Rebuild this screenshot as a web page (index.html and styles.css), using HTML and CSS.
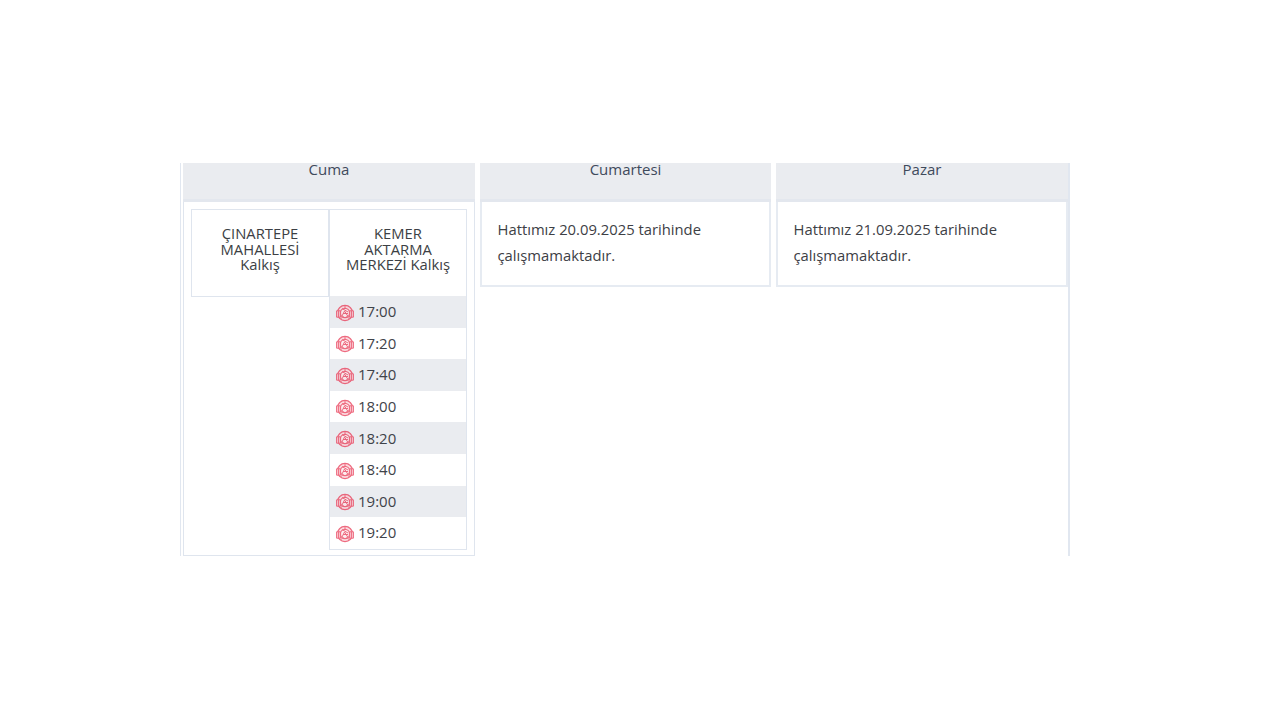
FILE: index.html
```html
<!DOCTYPE html>
<html lang="tr">
<head>
<meta charset="utf-8">
<title>Sefer Saatleri</title>
<link rel="stylesheet" href="styles.css">
</head>
<body>
<svg class="defs" width="0" height="0" aria-hidden="true">
  <symbol id="seal" viewBox="0 0 18 18">
    <g fill="none" stroke="#e8324f">
      <circle cx="9" cy="9" r="7.6" fill="#fbd0d7" stroke-width="1.4"/>
      <circle cx="9" cy="9" r="4.6" fill="#fde6e9" stroke-width="1.1"/>
      <path d="M.6 6.8h4v6.4h-4zM13.4 6.8h4v6.4h-4z" fill="#f8b9c3" stroke-width="1"/>
      <path d="M2.6 6.8v6.4M15.4 6.8v6.4M6 4.5l6 3.5M6 12l2.5-5 3.5 5.5M4.5 15l3-3M13.5 15l-3-3M9 1v3M7 9.5h5" stroke-width="1"/>
    </g>
  </symbol>
</svg>
<main class="page">
  <div class="days">
    <section class="day">
      <h2 class="day-head">Cuma</h2>
      <div class="day-body day-body-table">
        <div class="stops">
          <div class="stop-col">
            <div class="stop-head">ÇINARTEPE MAHALLESİ Kalkış</div>
          </div>
          <div class="stop-col stop-col-times">
            <div class="stop-head">KEMER AKTARMA MERKEZİ Kalkış</div>
            <div class="time alt"><svg class="seal"><use href="#seal"/></svg>17:00</div>
            <div class="time"><svg class="seal"><use href="#seal"/></svg>17:20</div>
            <div class="time alt"><svg class="seal"><use href="#seal"/></svg>17:40</div>
            <div class="time"><svg class="seal"><use href="#seal"/></svg>18:00</div>
            <div class="time alt"><svg class="seal"><use href="#seal"/></svg>18:20</div>
            <div class="time"><svg class="seal"><use href="#seal"/></svg>18:40</div>
            <div class="time alt"><svg class="seal"><use href="#seal"/></svg>19:00</div>
            <div class="time"><svg class="seal"><use href="#seal"/></svg>19:20</div>
          </div>
        </div>
      </div>
    </section>
    <section class="day">
      <h2 class="day-head">Cumartesi</h2>
      <div class="day-body"><p class="note">Hattımız 20.09.2025 tarihinde çalışmamaktadır.</p></div>
    </section>
    <section class="day">
      <h2 class="day-head">Pazar</h2>
      <div class="day-body"><p class="note">Hattımız 21.09.2025 tarihinde çalışmamaktadır.</p></div>
    </section>
  </div>
</main>
</body>
</html>
```
FILE: styles.css
```css
* { box-sizing: border-box; }
html, body { margin: 0; background: #fff; }
body { font-family: "Open Sans", "Noto Sans", sans-serif; color: #3a3f47; }
.defs { position: absolute; }
.page { padding: 163px 0 0 180px; }
.days {
  width: 890px;
  height: 393px;
  display: grid;
  grid-template-columns: 292px 291px 292px;
  column-gap: 5px;
  align-items: start;
  padding: 0 2px;
  border-left: 1px solid #e1e7f0;
  border-right: 2px solid #e1e7f0;
}
.day { display: flex; flex-direction: column; }
.day-head {
  margin: 0;
  height: 39px;
  background: #eaecf0;
  border-bottom: 3px solid #e3e7ee;
  font-size: 15px;
  font-weight: 400;
  line-height: 13px;
  text-align: center;
  color: #3f4a5c;
}
.day-body {
  border: 2px solid #e6ebf2;
  border-top: 0;
  background: #fff;
  padding: 15px 15px 17px 15.5px;
}
.day-body-table {
  height: 354px;
  padding: 7px 6px 6px 7px;
  border-width: 0 1px 1px;
  border-color: #dfe5ee;
}
.stops { display: grid; grid-template-columns: 138px 138px; align-items: start; }
.stop-col { border: 1px solid #dfe5ee; }
.stop-head {
  height: 86px;
  padding: 16px 14px 0;
  font-size: 14.8px;
  line-height: 15.5px;
  text-align: center;
  color: #3c3f44;
}
.time {
  height: 31.6px;
  display: flex;
  align-items: center;
  gap: 4px;
  padding: 0 0 1px 5px;
  font-size: 15px;
  color: #3f4349;
}
.time.alt { background: #eaecf0; }
.seal { width: 18px; height: 18px; flex: none; margin: 3px 0 0 1px; opacity: .72; }
.note {
  margin: 0;
  font-size: 14.8px;
  line-height: 25.5px;
  color: #3d4045;
}
```
